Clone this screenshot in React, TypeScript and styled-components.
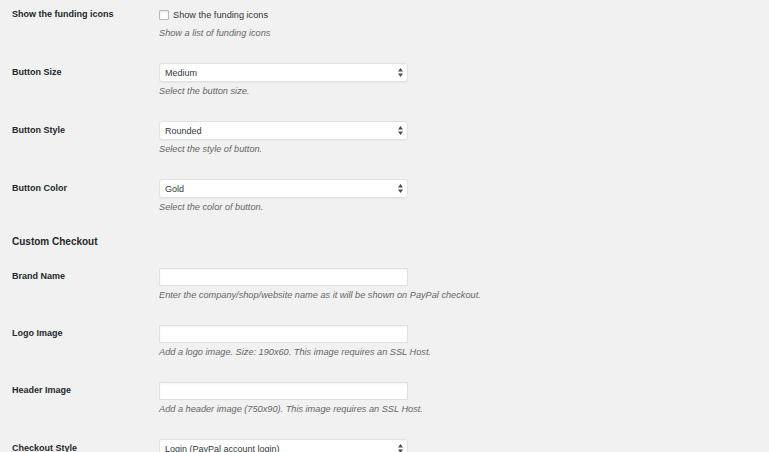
import React from 'react';
import styled, { createGlobalStyle } from 'styled-components';

const GlobalStyle = createGlobalStyle`
  html, body {
    margin: 0;
    padding: 0;
    background: #f1f1f1;
    font-family: "Liberation Sans", Arial, sans-serif;
    font-size: 9px;
    color: #23282d;
    overflow: hidden;
  }
`;

const Page = styled.div`
  width: 769px;
  height: 452px;
  overflow: hidden;
  padding-left: 12px;
  box-sizing: border-box;
`;

const Form = styled.div`
  margin-top: -7px;
`;

const Row = styled.div`
  display: grid;
  grid-template-columns: 147px 1fr;
  padding: 12px 0;
`;

const Label = styled.div<{ $lh?: number }>`
  font-weight: bold;
  line-height: ${p => p.$lh || 19}px;
  color: #23282d;
`;

const Field = styled.div`
  display: flex;
  flex-direction: column;
`;

const CheckLine = styled.label`
  display: flex;
  align-items: center;
  gap: 4px;
  height: 19px;
  font-size: 9.2px;
  color: #32373c;
`;

const CheckBox = styled.span`
  width: 10px;
  height: 10px;
  box-sizing: border-box;
  border: 1px solid #b4b9be;
  border-radius: 1px;
  background: #fff;
  box-shadow: inset 0 1px 2px rgba(0, 0, 0, 0.1);
`;

const SelectBox = styled.div`
  width: 249px;
  height: 19px;
  box-sizing: border-box;
  display: flex;
  align-items: center;
  justify-content: space-between;
  padding: 0 4px 0 5px;
  background: #fff;
  border: 1px solid #e2e2e2;
  border-radius: 3px;
  box-shadow: 0 1px 1px rgba(0, 0, 0, 0.04);
  color: #32373c;
`;

const TextInput = styled.input`
  width: 249px;
  height: 18px;
  box-sizing: border-box;
  margin: 0;
  padding: 0 5px;
  background: #fff;
  border: 1px solid #e0e0e0;
  border-radius: 0;
  box-shadow: inset 0 1px 2px rgba(0, 0, 0, 0.05);
  font: inherit;
  outline: none;
`;

const Description = styled.p`
  margin: 3px 0 0;
  line-height: 12px;
  font-size: 9.2px;
  font-style: italic;
  color: #666;
`;

const Heading = styled.h2`
  margin: 0;
  padding: 11px 0 8px;
  font-size: 10px;
  line-height: 12px;
  font-weight: bold;
  color: #23282d;
`;

const Arrows = () => (
  <svg width="5" height="9" viewBox="0 0 5 9">
    <path d="M2.5 0 L5 3.4 L0 3.4 Z" fill="#4a4a4a" />
    <path d="M2.5 9 L5 5.6 L0 5.6 Z" fill="#4a4a4a" />
  </svg>
);

const Select = ({ value }: { value: string }) => (
  <SelectBox>
    <span>{value}</span>
    <Arrows />
  </SelectBox>
);

const selects = [
  { label: 'Button Size', value: 'Medium', desc: 'Select the button size.' },
  { label: 'Button Style', value: 'Rounded', desc: 'Select the style of button.' },
  { label: 'Button Color', value: 'Gold', desc: 'Select the color of button.' },
];

const inputs = [
  {
    label: 'Brand Name',
    desc: 'Enter the company/shop/website name as it will be shown on PayPal checkout.',
  },
  { label: 'Logo Image', desc: 'Add a logo image. Size: 190x60. This image requires an SSL Host.' },
  { label: 'Header Image', desc: 'Add a header image (750x90). This image requires an SSL Host.' },
];

export default function App() {
  return (
    <Page>
      <GlobalStyle />
      <Form>
        <Row>
          <Label>Show the funding icons</Label>
          <Field>
            <CheckLine>
              <CheckBox />
              Show the funding icons
            </CheckLine>
            <Description>Show a list of funding icons</Description>
          </Field>
        </Row>
        {selects.map(s => (
          <Row key={s.label}>
            <Label>{s.label}</Label>
            <Field>
              <Select value={s.value} />
              <Description>{s.desc}</Description>
            </Field>
          </Row>
        ))}
        <Heading>Custom Checkout</Heading>
        {inputs.map(i => (
          <Row key={i.label}>
            <Label $lh={17}>{i.label}</Label>
            <Field>
              <TextInput type="text" />
              <Description>{i.desc}</Description>
            </Field>
          </Row>
        ))}
        <Row>
          <Label>Checkout Style</Label>
          <Field>
            <Select value="Login (PayPal account login)" />
          </Field>
        </Row>
      </Form>
    </Page>
  );
}
